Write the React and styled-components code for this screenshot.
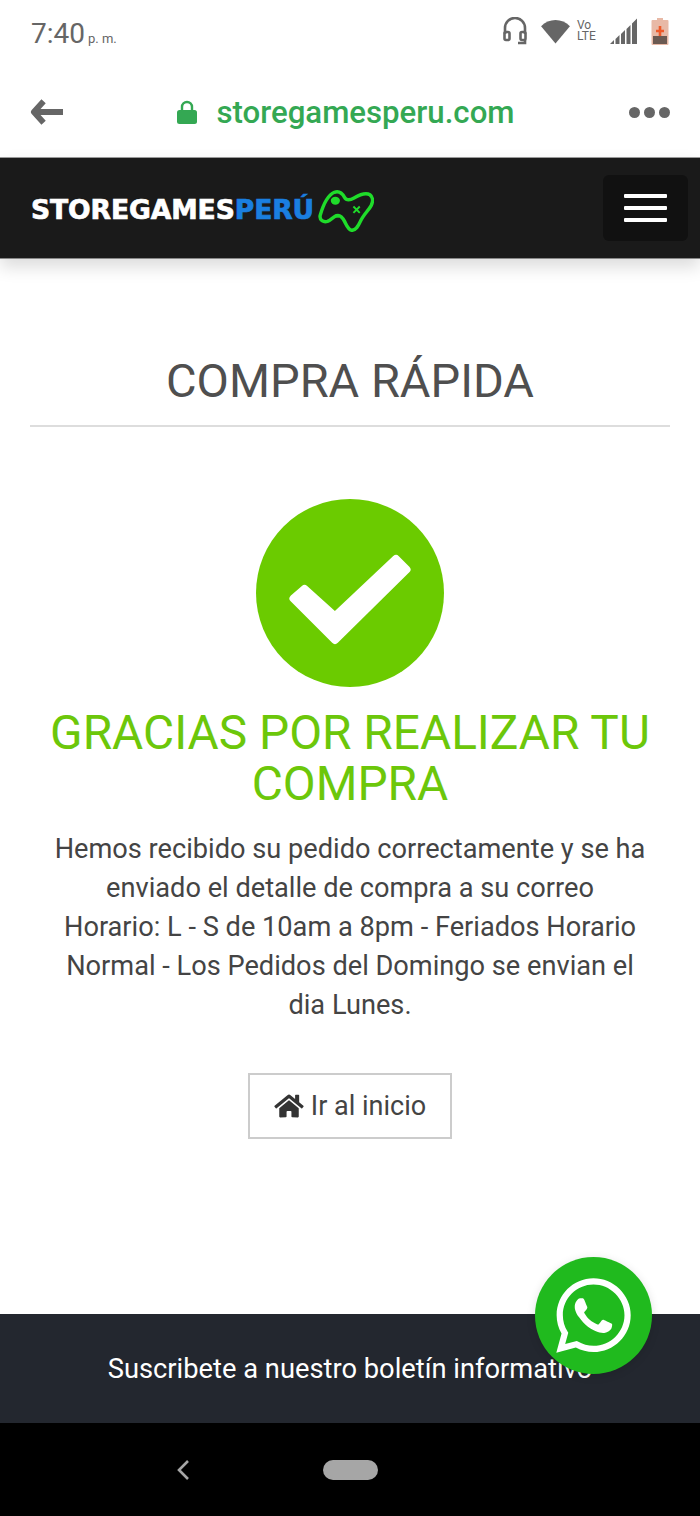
import React from 'react'
import styled, { createGlobalStyle } from 'styled-components'
import { FaWhatsapp } from 'react-icons/fa'

const GlobalStyle = createGlobalStyle`
  html, body {
    margin: 0;
    padding: 0;
    background: #fff;
  }
  body {
    font-family: 'Roboto', 'Liberation Sans', sans-serif;
  }
`

const Page = styled.div`
  position: relative;
  width: 700px;
  height: 1516px;
  display: flex;
  flex-direction: column;
  overflow: hidden;
  background: #fff;
`

const StatusBar = styled.div`
  height: 67px;
  padding: 0 31px;
  display: flex;
  align-items: center;
  justify-content: space-between;
  color: #666;
`

const Clock = styled.div`
  font-size: 28px;
  line-height: 1;
  display: flex;
  align-items: baseline;
  gap: 3px;
  small {
    font-size: 13px;
  }
`

const StatusIcons = styled.div`
  display: flex;
  align-items: center;
  gap: 13px;
  margin-top: -5px;
`

const VoLte = styled.span`
  font-size: 12px;
  line-height: 11px;
  width: 20px;
  margin-left: -7px;
  color: #666;
`

const UrlBar = styled.div`
  height: 90px;
  padding: 0 30px;
  display: flex;
  align-items: center;
  justify-content: space-between;
`

const Address = styled.div`
  display: flex;
  align-items: center;
  gap: 19px;
  font-size: 31.2px;
  font-weight: 500;
  color: #34a853;
`

const Dots = styled.div`
  display: flex;
  gap: 4px;
  span {
    width: 11px;
    height: 11px;
    border-radius: 50%;
    background: #666;
  }
`

const Navbar = styled.header`
  height: 102px;
  padding: 0 12px 0 31px;
  box-sizing: border-box;
  background: #1a1a1a;
  border-top: 1px solid #999;
  border-bottom: 1px solid #888;
  box-shadow: 0 8px 16px rgba(0, 0, 0, 0.14);
  display: flex;
  align-items: center;
  justify-content: space-between;
  position: relative;
`

const Logo = styled.div`
  display: flex;
  align-items: center;
  padding-top: 3px;
  font-family: 'DejaVu Sans', sans-serif;
  font-weight: 700;
  font-size: 26.6px;
  letter-spacing: -0.1px;
  color: #fff;
  -webkit-text-stroke: 0.7px currentColor;
`

const LogoAccent = styled.span`
  color: #1a7fe0;
`

const MenuButton = styled.button`
  width: 85px;
  height: 66px;
  padding: 0;
  border: 0;
  border-radius: 6px;
  background: #111;
  display: flex;
  flex-direction: column;
  align-items: center;
  justify-content: center;
  gap: 8px;
  span {
    width: 43px;
    height: 4px;
    border-radius: 1px;
    background: #fff;
  }
`

const Main = styled.main`
  flex: 1;
  padding: 0 30px;
  display: flex;
  flex-direction: column;
  align-items: center;
`

const Title = styled.h1`
  align-self: stretch;
  margin: 92px 0 0;
  padding-bottom: 14px;
  border-bottom: 2px solid #ddd;
  text-align: center;
  font-size: 47px;
  line-height: 60px;
  font-weight: 400;
  color: #4f4f4f;
`

const CheckCircle = styled.div`
  width: 188px;
  height: 188px;
  margin-top: 72px;
  border-radius: 50%;
  background: #6bcb00;
`

const Thanks = styled.h2`
  margin: 21px 0 0;
  text-align: center;
  font-size: 47.8px;
  line-height: 51px;
  font-weight: 400;
  color: #6cc70a;
`

const Message = styled.p`
  margin: 20px 0 0;
  text-align: center;
  font-size: 27.2px;
  line-height: 39px;
  color: #444;
`

const HomeLink = styled.a`
  margin-top: 48px;
  width: 204px;
  height: 66px;
  box-sizing: border-box;
  border: 2px solid #ccc;
  display: flex;
  align-items: center;
  justify-content: center;
  gap: 7px;
  font-size: 27px;
  color: #444;
`

const Newsletter = styled.div`
  height: 109px;
  background: #23272f;
  color: #fff;
  font-size: 27.3px;
  display: flex;
  align-items: center;
  justify-content: center;
`

const NavBar = styled.div`
  height: 93px;
  background: #000;
  position: relative;
  display: flex;
  align-items: center;
  justify-content: center;
`

const Pill = styled.div`
  width: 55px;
  height: 20px;
  border-radius: 10px;
  background: #a6a6a6;
`

const BackChevron = styled.svg`
  position: absolute;
  left: 176px;
  top: 36px;
`

const WhatsappButton = styled.a`
  position: absolute;
  left: 535px;
  top: 1257px;
  width: 117px;
  height: 117px;
  border-radius: 50%;
  background: #20ba1e;
  color: #fff;
  display: flex;
  align-items: center;
  justify-content: center;
  box-shadow: 0 2px 10px rgba(0, 0, 0, 0.12);
`

const App = () => (
  <Page>
    <GlobalStyle />
    <StatusBar>
      <Clock>
        7:40<small>p. m.</small>
      </Clock>
      <StatusIcons>
        <svg width="24" height="28" viewBox="0 0 24 28" fill="none" stroke="#666" strokeWidth="2.6">
          <path d="M2 17V11a10 10 0 0 1 20 0v6" />
          <rect x="1.500" y="15" width="5" height="8" rx="1.500" />
          <rect x="17.500" y="15" width="5" height="8" rx="1.500" />
          <path d="M22 23v3h-7" />
        </svg>
        <svg width="31" height="25" viewBox="0 0 32 26">
          <path d="M1 7.500C9-1 23-1 31 7.500L16 25.500Z" fill="#666" />
        </svg>
        <VoLte>
          Vo
          <br />
          LTE
        </VoLte>
        <svg width="28" height="28" viewBox="0 0 28 28" fill="#666">
          <path d="M0 27l4-4v4zM5.500 22l4-4v9h-4zM11 17l4-4v14h-4zM16.500 12l4-4v19h-4zM22 6.500l5-5V27h-5z" />
        </svg>
        <svg width="18" height="28" viewBox="0 0 18 28">
          <path d="M6 1h6v2h4.500a1 1 0 0 1 1 1v23a1 1 0 0 1-1 1h-15a1 1 0 0 1-1-1V4a1 1 0 0 1 1-1H6z" fill="#e8b9a6" />
          <rect x="2" y="19" width="14" height="8" fill="#6b5a52" />
          <path d="M9 9v10M5 14h8" stroke="#ee5a2a" strokeWidth="2.6" />
        </svg>
      </StatusIcons>
    </StatusBar>

    <UrlBar>
      <svg width="33" height="28" viewBox="0 0 34 28" fill="none" stroke="#666" strokeWidth="6" strokeLinejoin="round">
        <path d="M14 3L4 14l10 11M5 14h29" />
      </svg>
      <Address>
        <svg width="20" height="25" viewBox="0 0 20 25">
          <path d="M5 11V7a5 5 0 0 1 10 0v4" fill="none" stroke="#34a853" strokeWidth="2.400" />
          <rect x="0" y="10" width="20" height="14" rx="2.500" fill="#34a853" />
        </svg>
        storegamesperu.com
      </Address>
      <Dots>
        <span />
        <span />
        <span />
      </Dots>
    </UrlBar>

    <Navbar>
      <Logo>
        STOREGAMES<LogoAccent>PERÚ</LogoAccent>
        <svg width="57" height="44" viewBox="30 22 180 138" fill="none" stroke="#1fdc2a" strokeWidth="11" strokeLinejoin="round" style={{ marginLeft: 3 }}>
          <path d="M40 108C48 80 62 45 85 35c14-5 24 2 32 16 6 11 18 9 30 2 14-8 34-19 50-10 10 7 10 22 4 34-8 15-24 28-34 50-7 15-14 29-28 28-11-2-15-14-22-28-6-12-14-22-26-18-10 4-18 14-28 18-12 4-26-4-23-19z" />
          <ellipse cx="88" cy="62" rx="9" ry="7" fill="#1fdc2a" />
          <path d="M145 80l20 20M165 80l-20 20" strokeWidth="6" />
          <path d="M85 112h14" strokeWidth="6" />
        </svg>
      </Logo>
      <MenuButton aria-label="menu">
        <span />
        <span />
        <span />
      </MenuButton>
    </Navbar>

    <Main>
      <Title>COMPRA RÁPIDA</Title>
      <CheckCircle>
        <svg width="188" height="188" viewBox="0 0 188 188" fill="#fff" stroke="#fff" strokeWidth="8" strokeLinejoin="round">
          <path d="M37.500 99.500L48.500 90 79 117.500 140 60l10.500 10.500L79 141z" />
        </svg>
      </CheckCircle>
      <Thanks>
        GRACIAS POR REALIZAR TU
        <br />
        COMPRA
      </Thanks>
      <Message>
        Hemos recibido su pedido correctamente y se ha
        <br />
        enviado el detalle de compra a su correo
        <br />
        Horario: L - S de 10am a 8pm - Feriados Horario
        <br />
        Normal - Los Pedidos del Domingo se envian el
        <br />
        dia Lunes.
      </Message>
      <HomeLink>
        <svg width="30" height="26" viewBox="0 0 576 512" fill="#333">
          <path d="M280.400 148.300L96 300.100V464a16 16 0 0 0 16 16l112.100-.3a16 16 0 0 0 15.900-16V368a16 16 0 0 1 16-16h64a16 16 0 0 1 16 16v95.600a16 16 0 0 0 16 16.100L464 480a16 16 0 0 0 16-16V300L295.700 148.300a12.200 12.200 0 0 0-15.300 0zM571.600 251.500L488 182.600V44.100a12 12 0 0 0-12-12h-56a12 12 0 0 0-12 12v72.600L318.500 43a48 48 0 0 0-61 0L4.300 251.500a12 12 0 0 0-1.600 16.900l25.500 31A12 12 0 0 0 45.200 301l235.200-193.700a12.200 12.200 0 0 1 15.300 0L530.900 301a12 12 0 0 0 16.900-1.600l25.500-31a12 12 0 0 0-1.700-16.900z" />
        </svg>
        Ir al inicio
      </HomeLink>
    </Main>

    <Newsletter>Suscribete a nuestro boletín informativo</Newsletter>
    <NavBar>
      <BackChevron width="14" height="22" viewBox="0 0 14 22" fill="none" stroke="#a6a6a6" strokeWidth="2.600">
        <path d="M12 2L3 11l9 9" />
      </BackChevron>
      <Pill />
    </NavBar>

    <WhatsappButton>
      <FaWhatsapp size={85} />
    </WhatsappButton>
  </Page>
)

export default App
